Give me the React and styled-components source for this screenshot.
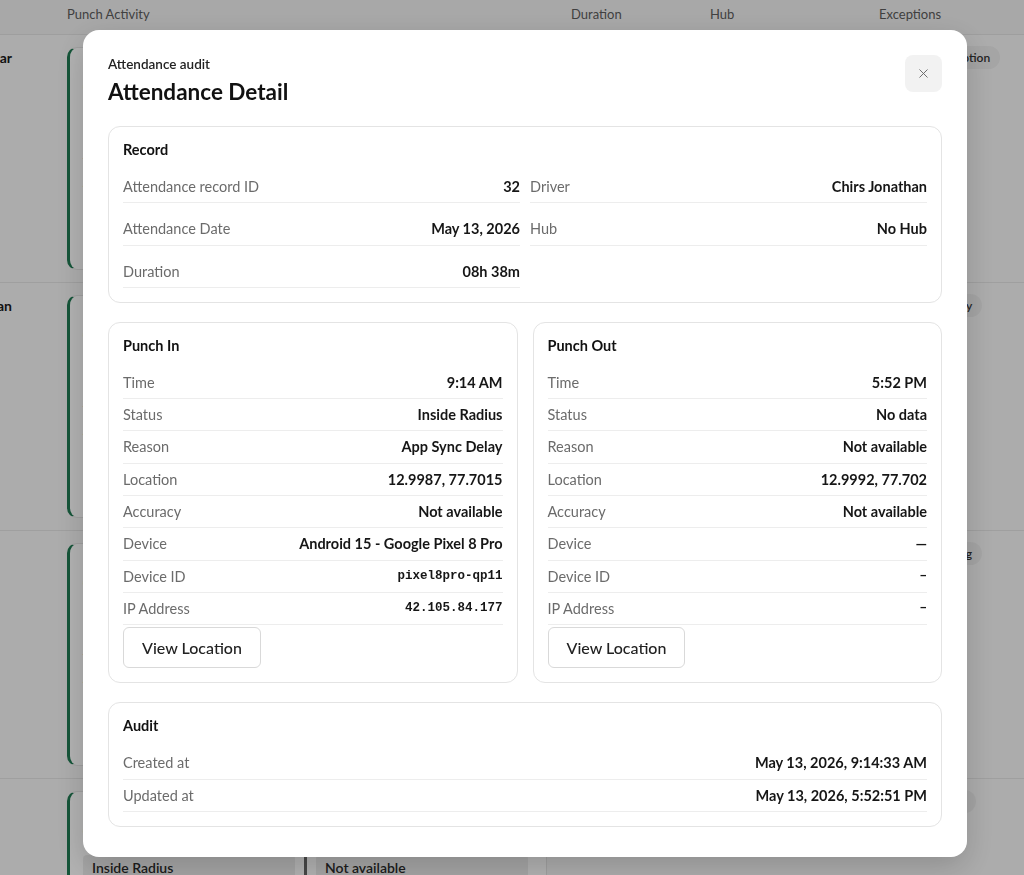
import React from 'react';
import styled, { createGlobalStyle } from 'styled-components';
import { X } from 'lucide-react';

const GlobalStyle = createGlobalStyle`
  * { box-sizing: border-box; }
  html, body { margin: 0; padding: 0; }
  body {
    background: #f6f6f6;
    font-family: Lato, "Noto Sans", sans-serif;
    color: #1a1a1a;
    overflow: hidden;
  }
`;

const rows = [
  { id: 1, name: 'Ravi Kumar', badge: 'Location Exception' },
  { id: 2, name: 'Chirs Jonathan', badge: 'App Sync Delay' },
  { id: 3, name: '', badge: 'Radius Warning' },
  { id: 4, name: '', badge: 'Auto Closed', wide: true, pills: true },
];

const punchIn = [
  ['Time', '9:14 AM'],
  ['Status', 'Inside Radius'],
  ['Reason', 'App Sync Delay'],
  ['Location', '12.9987, 77.7015'],
  ['Accuracy', 'Not available'],
  ['Device', 'Android 15 - Google Pixel 8 Pro'],
  ['Device ID', 'pixel8pro-qp11', true],
  ['IP Address', '42.105.84.177', true],
];

const punchOut = [
  ['Time', '5:52 PM'],
  ['Status', 'No data'],
  ['Reason', 'Not available'],
  ['Location', '12.9992, 77.702'],
  ['Accuracy', 'Not available'],
  ['Device', '—'],
  ['Device ID', '–', true],
  ['IP Address', '–', true],
];

const App = () => {
  return (
    <>
      <GlobalStyle />
      <Page>
        <TableHead>
          <span />
          <span>Punch Activity</span>
          <span>Duration</span>
          <span>Hub</span>
          <span>Exceptions</span>
        </TableHead>
        {rows.map((r) => (
          <TableRow key={r.id}>
            <NameCell>
              <strong>{r.name}</strong>
            </NameCell>
            <ActivityCell>
              <ActivityCard>
                <small>Punch In</small>
                <b>09:14 AM</b>
                {r.pills ? (
                  <PillRow>
                    <Pill>Inside Radius</Pill>
                    <PillDivider />
                    <Pill>Not available</Pill>
                  </PillRow>
                ) : (
                  <>
                    <CardLines>
                      <small>Mode: Mobile app</small>
                      <small>Time: On time</small>
                      <small>Accuracy: Not available</small>
                      <small>Device: Android</small>
                    </CardLines>
                    <GhostButton />
                  </>
                )}
              </ActivityCard>
            </ActivityCell>
            <span />
            <span />
            <BadgeCell>
              <Badge wide={r.wide}>{r.badge}</Badge>
            </BadgeCell>
          </TableRow>
        ))}
      </Page>

      <Overlay>
        <Modal>
          <ModalHeader>
            <div>
              <Eyebrow>Attendance audit</Eyebrow>
              <ModalTitle>Attendance Detail</ModalTitle>
            </div>
            <CloseButton aria-label='Close'>
              <X size={15} strokeWidth={1.5} />
            </CloseButton>
          </ModalHeader>

          <Section>
            <SectionTitle>Record</SectionTitle>
            <RecordGrid>
              <Row>
                <Label>Attendance record ID</Label>
                <Value>32</Value>
              </Row>
              <Row>
                <Label>Driver</Label>
                <Value>Chirs Jonathan</Value>
              </Row>
              <Row>
                <Label>Attendance Date</Label>
                <Value>May 13, 2026</Value>
              </Row>
              <Row>
                <Label>Hub</Label>
                <Value>No Hub</Value>
              </Row>
              <Row>
                <Label>Duration</Label>
                <Value>08h 38m</Value>
              </Row>
            </RecordGrid>
          </Section>

          <Split>
            {[
              ['Punch In', punchIn],
              ['Punch Out', punchOut],
            ].map(([title, items]) => (
              <Section key={title}>
                <SectionTitle>{title}</SectionTitle>
                <List>
                  {items.map(([label, value, mono]) => (
                    <Row key={label}>
                      <Label>{label}</Label>
                      <Value mono={mono}>{value}</Value>
                    </Row>
                  ))}
                </List>
                <OutlineButton>View Location</OutlineButton>
              </Section>
            ))}
          </Split>

          <Section>
            <SectionTitle>Audit</SectionTitle>
            <List>
              <Row>
                <Label>Created at</Label>
                <Value>May 13, 2026, 9:14:33 AM</Value>
              </Row>
              <Row>
                <Label>Updated at</Label>
                <Value>May 13, 2026, 5:52:51 PM</Value>
              </Row>
            </List>
          </Section>
        </Modal>
      </Overlay>
    </>
  );
};
export default App;

const cols = '67px 504px 139px 169px 1fr';

const Page = styled.div`
  width: 1024px;
  height: 875px;
  overflow: hidden;
  background: #f7f7f7;
`;

const TableHead = styled.div`
  display: grid;
  grid-template-columns: ${cols};
  align-items: start;
  height: 35px;
  padding-top: 6px;
  background: #f1f1f1;
  border-bottom: 1px solid #e2e2e2;
  font-size: 13px;
  line-height: 16px;
  color: #5c5c5c;
`;

const TableRow = styled.div`
  display: grid;
  grid-template-columns: ${cols};
  height: 248px;
  border-bottom: 1px solid #e4e4e4;
`;

const NameCell = styled.div`
  display: flex;
  justify-content: flex-end;
  overflow: hidden;
  white-space: nowrap;
  padding: 14px 55px 0 0;

  strong {
    font-size: 14px;
    color: #1a1a1a;
  }
`;

const ActivityCell = styled.div`
  padding: 12px 0;
`;

const ActivityCard = styled.div`
  display: flex;
  flex-direction: column;
  height: 100%;
  width: 480px;
  padding: 9px 13px;
  background: #fff;
  border: 1px solid #e5e5e5;
  border-left: 3px solid #1f7a52;
  border-radius: 10px;
  font-size: 13px;
  color: #666;

  b {
    margin-top: 6px;
    font-size: 18px;
    color: #111;
  }
`;

const CardLines = styled.div`
  display: flex;
  flex-direction: column;
  gap: 8px;
  margin-top: 36px;
`;

const GhostButton = styled.div`
  width: 90px;
  height: 26px;
  border: 1px solid #ddd;
  border-radius: 6px;
  margin-top: auto;
`;

const PillRow = styled.div`
  display: flex;
  align-items: flex-start;
  gap: 9px;
  margin-top: 13px;
`;

const Pill = styled.span`
  width: 212px;
  padding: 4px 9px;
  border-radius: 4px;
  background: #ededed;
  font-size: 14px;
  font-weight: 600;
  color: #2a2a2a;
`;

const PillDivider = styled.span`
  width: 3px;
  height: 30px;
  background: #666;
`;

const BadgeCell = styled.div`
  padding: 11px 0 0 0;
`;

const Badge = styled.span`
  display: inline-block;
  padding: ${({ wide }) => (wide ? '4px 16px' : '4px 10px')};
  border-radius: 12px;
  background: #ececec;
  font-size: 12px;
  font-weight: 600;
  color: #333;
`;

const Overlay = styled.div`
  position: fixed;
  inset: 0;
  display: flex;
  align-items: flex-start;
  padding: 30px 0 0 83px;
  background: rgba(0, 0, 0, 0.3);
`;

const Modal = styled.div`
  display: flex;
  flex-direction: column;
  gap: 19px;
  width: 884px;
  height: 827px;
  padding: 25px 25px 30px;
  background: #fff;
  border-radius: 16px;
  box-shadow: 0 10px 30px rgba(0, 0, 0, 0.18);
`;

const ModalHeader = styled.div`
  display: flex;
  justify-content: space-between;
  align-items: flex-start;
`;

const Eyebrow = styled.div`
  font-size: 13.5px;
  font-weight: 600;
  line-height: 18px;
  color: #222;
`;

const ModalTitle = styled.h2`
  margin: 4px 0 0;
  font-size: 22.5px;
  font-weight: 700;
  line-height: 30px;
  color: #111;
`;

const CloseButton = styled.button`
  display: flex;
  align-items: center;
  justify-content: center;
  width: 37px;
  height: 37px;
  border: none;
  border-radius: 8px;
  background: #f2f2f2;
  color: #666;
  cursor: pointer;
`;

const Section = styled.div`
  display: flex;
  flex-direction: column;
  align-items: flex-start;
  padding: 14px;
  border: 1px solid #e4e4e4;
  border-radius: 12px;
  background: #fff;
`;

const SectionTitle = styled.div`
  font-size: 14.5px;
  font-weight: 700;
  line-height: 18px;
  color: #111;
  margin-bottom: 12px;
`;

const RecordGrid = styled.div`
  display: grid;
  grid-template-columns: 1fr 1fr;
  gap: 10px;
  width: 100%;
`;

const List = styled.div`
  display: flex;
  flex-direction: column;
  width: 100%;
`;

const Row = styled.div`
  display: flex;
  justify-content: space-between;
  align-items: center;
  gap: 12px;
  padding: 7px 0;
  border-bottom: 1px solid #ededed;
  font-size: 14.5px;
  line-height: 17.3px;
`;

const Label = styled.span`
  color: #6b6b6b;
  white-space: nowrap;
`;

const Value = styled.span`
  font-family: ${({ mono }) =>
    mono ? '"Liberation Mono", "Courier New", monospace' : 'inherit'};
  font-size: ${({ mono }) => (mono ? '12.5px' : '14.5px')};
  font-weight: 700;
  color: #161616;
  text-align: right;
  white-space: nowrap;
`;

const Split = styled.div`
  display: grid;
  grid-template-columns: 1fr 1fr;
  gap: 15px;
`;

const OutlineButton = styled.button`
  margin-top: 2px;
  height: 41px;
  padding: 0 18px;
  border: 1px solid #d9d9d9;
  border-radius: 6px;
  background: #fff;
  font-family: inherit;
  font-size: 16px;
  font-weight: 500;
  color: #222;
  cursor: pointer;
`;
